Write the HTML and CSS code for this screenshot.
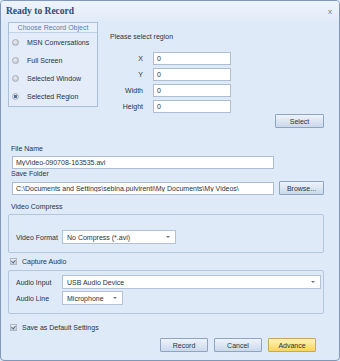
FILE: index.html
```html
<!DOCTYPE html>
<html lang="en">
<head>
    <meta charset="UTF-8">
    <meta name="viewport" content="width=device-width, initial-scale=1.0">
    <title>Ready to Record</title>
    <link rel="stylesheet" href="styles.css">
</head>
<body>
    <div class="window">
        <div class="titlebar">
            <span class="title">Ready to Record</span>
            <span class="close">x</span>
        </div>

        <div class="content">
            <!-- Record object + region -->
            <div class="top">
                <div class="object-group">
                    <div class="group-head">Choose Record Object</div>
                    <div class="radio"><span class="dot"></span>MSN Conversations</div>
                    <div class="radio"><span class="dot"></span>Full Screen</div>
                    <div class="radio"><span class="dot"></span>Selected Window</div>
                    <div class="radio"><span class="dot checked"></span>Selected Region</div>
                </div>

                <div class="region">
                    <div class="region-title">Please select region</div>
                    <div class="region-grid">
                        <span class="coord-label">X</span><input class="field" type="text" value="0">
                        <span class="coord-label">Y</span><input class="field" type="text" value="0">
                        <span class="coord-label">Width</span><input class="field" type="text" value="0">
                        <span class="coord-label">Height</span><input class="field" type="text" value="0">
                    </div>
                </div>

                <button class="btn select-btn">Select</button>
            </div>

            <!-- File -->
            <div class="file-section">
                <div class="label">File Name</div>
                <input class="field file-field" type="text" value="MyVideo-090708-163535.avi">
                <div class="label">Save Folder</div>
                <div class="folder-row">
                    <input class="field file-field" type="text" value="C:\Documents and Settings\sebina.pulvirenti\My Documents\My Videos\">
                    <button class="btn browse-btn">Browse...</button>
                </div>
            </div>

            <!-- Video -->
            <div class="label section-label">Video Compress</div>
            <div class="box video-box">
                <div class="box-row">
                    <span class="row-label">Video Format</span>
                    <div class="select format-select">No Compress (*.avi)<span class="arrow"></span></div>
                </div>
            </div>

            <!-- Audio -->
            <div class="check-row"><span class="check"></span>Capture Audio</div>
            <div class="box audio-box">
                <div class="box-row">
                    <span class="row-label">Audio Input</span>
                    <div class="select input-select">USB Audio Device<span class="arrow"></span></div>
                </div>
                <div class="box-row">
                    <span class="row-label">Audio Line</span>
                    <div class="select line-select">Microphone<span class="arrow"></span></div>
                </div>
            </div>

            <div class="check-row default-row"><span class="check"></span>Save as Default Settings</div>

            <div class="button-row">
                <button class="btn">Record</button>
                <button class="btn">Cancel</button>
                <button class="btn btn-advance">Advance</button>
            </div>
        </div>
    </div>
</body>
</html>
```

FILE: styles.css
```css
/* General */
body {
    margin: 0;
    padding: 0;
    font-family: "Liberation Sans", Arial, sans-serif;
    font-size: 7px;
    color: #2a3240;
    background-color: #dfeaf8;
}

.window {
    width: 340px;
    height: 361px;
    box-sizing: border-box;
    border: 1px solid #8197b8;
    border-radius: 4px;
    background-color: #dfeaf8;
    overflow: hidden;
}

/* Title bar */
.titlebar {
    height: 20px;
    display: flex;
    align-items: center;
    justify-content: space-between;
    padding: 0 7px 0 5px;
    background: linear-gradient(#eef4fc, #e1ebf8);
}

.title {
    font-family: "Liberation Serif", "Times New Roman", serif;
    font-weight: bold;
    font-size: 9.5px;
    color: #2c4a7c;
}

.close {
    font-size: 8px;
    color: #6d7a8c;
}

.content {
    padding: 1px 15px 0 7px;
}

/* Top section */
.top {
    display: flex;
    height: 106px;
}

.object-group {
    width: 90px;
    height: 85px;
    box-sizing: border-box;
    border: 1px solid #aabfda;
    background-color: #e3ecf8;
}

.group-head {
    height: 9px;
    line-height: 9px;
    text-align: center;
    color: #5b7cad;
    background-color: #e9f0fa;
    border-bottom: 1px solid #c1d1e5;
}

.radio {
    height: 18px;
    display: flex;
    align-items: center;
    padding-left: 3px;
}

.dot {
    width: 7px;
    height: 7px;
    margin-right: 8px;
    border-radius: 50%;
    box-sizing: border-box;
    border: 1px solid #a9b0ba;
    background: radial-gradient(circle at 40% 35%, #eceef1, #b9bfc8);
}

.dot.checked {
    background: radial-gradient(circle, #4e6f9f 0 1.5px, #dfe4ea 2px, #b5bcc6);
}

.region {
    margin-left: 12px;
    padding-top: 10px;
}

.region-title {
    line-height: 10px;
}

.region-grid {
    display: grid;
    grid-template-columns: 33px 78px;
    grid-auto-rows: 13px;
    column-gap: 10px;
    row-gap: 3px;
    margin-top: 10px;
}

.coord-label {
    text-align: right;
    line-height: 13px;
}

.field {
    height: 13px;
    box-sizing: border-box;
    margin: 0;
    padding: 0 3px;
    border: 1px solid #aebdd2;
    background-color: #fff;
    font-family: "Liberation Sans", Arial, sans-serif;
    font-size: 7px;
    color: #2a3240;
    outline: none;
}

/* Buttons */
.btn {
    width: 48px;
    height: 14px;
    box-sizing: border-box;
    padding: 0;
    border: 1px solid #8fa4c3;
    border-radius: 1px;
    background: linear-gradient(#eef3fa, #cbd9ec);
    font-family: "Liberation Sans", Arial, sans-serif;
    font-size: 7px;
    color: #2a3240;
}

.select-btn {
    margin-left: auto;
    align-self: flex-end;
    width: 49px;
}

.btn-advance {
    border-color: #c7a95c;
    background: linear-gradient(#fff4b8, #fad35b);
}

/* File section */
.file-section {
    margin-top: 16px;
    padding-left: 3px;
}

.label {
    line-height: 10px;
}

.file-field {
    width: 262px;
    display: block;
    margin: 2px 0 0 1px;
}

.folder-row {
    display: flex;
    align-items: center;
    margin-top: 2px;
}

.folder-row .file-field {
    margin-top: 0;
}

.browse-btn {
    width: 45px;
    margin-left: 5px;
}

/* Group boxes */
.section-label {
    margin-top: 7px;
    padding-left: 3px;
}

.box {
    border: 1px solid #b3c6de;
    border-radius: 2px;
    padding-left: 7px;
    box-sizing: border-box;
}

.video-box {
    height: 39px;
    margin-top: 2px;
    padding-top: 15px;
}

.audio-box {
    height: 44px;
    margin-top: 4px;
    padding-top: 4px;
    display: flex;
    flex-direction: column;
    gap: 2px;
}

.box-row {
    display: flex;
    align-items: center;
}

.row-label {
    width: 46px;
}

.select {
    height: 14px;
    box-sizing: border-box;
    display: flex;
    align-items: center;
    padding-left: 4px;
    border: 1px solid #b3c2d6;
    background-color: #fff;
}

.arrow {
    margin-left: auto;
    margin-right: 5px;
    width: 0;
    height: 0;
    border-left: 2px solid transparent;
    border-right: 2px solid transparent;
    border-top: 2px solid #6a7585;
}

.format-select {
    width: 114px;
}

.input-select {
    width: 259px;
}

.line-select {
    width: 61px;
}

/* Checkboxes */
.check-row {
    display: flex;
    align-items: center;
    height: 10px;
    margin-top: 3px;
    padding-left: 2px;
}

.check {
    width: 7px;
    height: 7px;
    margin-right: 5px;
    box-sizing: border-box;
    border: 1px solid #b0b7c1;
    background: linear-gradient(#eef0f3, #c8cdd5);
    position: relative;
}

.check::after {
    content: "";
    position: absolute;
    left: 1px;
    top: 0;
    width: 2px;
    height: 3px;
    border-right: 1px solid #4f6e9c;
    border-bottom: 1px solid #4f6e9c;
    transform: rotate(40deg);
}

.default-row {
    margin-top: 8px;
}

.button-row {
    display: flex;
    justify-content: flex-end;
    gap: 6px;
    margin-top: 6px;
    padding-right: 8px;
}
```
